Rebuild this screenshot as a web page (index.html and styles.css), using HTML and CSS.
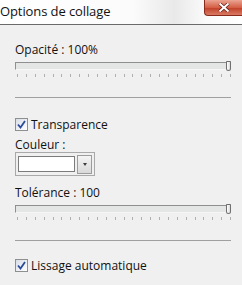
FILE: index.html
```html
<!DOCTYPE html>
<html>
<head>
    <title>Options de collage</title>
    <link rel="stylesheet" href="styles.css">
</head>
<body>
    <div class="titlebar">
        <span class="title">Options de collage</span>
        <button class="close"><svg viewBox="0 0 12 9" width="12" height="9"><path d="M1.5 0.5 L10.5 8.5 M10.5 0.5 L1.5 8.5" stroke="#5e1a10" stroke-width="3.4"/><path d="M1.5 0.5 L10.5 8.5 M10.5 0.5 L1.5 8.5" stroke="#ffffff" stroke-width="2"/></svg></button>
    </div>
    <div class="content">
        <div class="label label-first">Opacité : 100%</div>
        <div class="slider">
            <div class="track"></div>
            <div class="thumb"></div>
        </div>
        <div class="ticks" data-count="25"></div>
        <hr class="sep">

        <label class="check check-first">
            <span class="box"><svg viewBox="0 0 9 9" width="9" height="9"><path d="M1 4.5 L3.5 7.5 L8 1" fill="none" stroke="#2a4a9c" stroke-width="1.8"/></svg></span>
            Transparence
        </label>
        <div class="label label-color">Couleur :</div>
        <div class="color-picker">
            <span class="swatch"></span>
            <span class="drop"><span class="arrow"></span></span>
        </div>
        <div class="label label-tol">Tolérance : 100</div>
        <div class="slider">
            <div class="track"></div>
            <div class="thumb"></div>
        </div>
        <div class="ticks" data-count="25"></div>
        <hr class="sep">

        <label class="check check-last">
            <span class="box"><svg viewBox="0 0 9 9" width="9" height="9"><path d="M1 4.5 L3.5 7.5 L8 1" fill="none" stroke="#2a4a9c" stroke-width="1.8"/></svg></span>
            Lissage automatique
        </label>
    </div>
    <script>
        document.querySelectorAll('.ticks').forEach(function(row) {
            const count = parseInt(row.dataset.count, 10);
            for (let i = 0; i < count; i++) {
                const tick = document.createElement('span');
                row.appendChild(tick);
            }
        });
    </script>
</body>
</html>
```

FILE: styles.css
```css
body {
    margin: 0;
    width: 242px;
    height: 285px;
    overflow: hidden;
    background: #f0f0f0;
    font-family: "Open Sans", "Noto Sans", sans-serif;
    font-size: 12px;
    color: #111;
}
.titlebar {
    height: 24px;
    display: flex;
    align-items: flex-start;
    background: linear-gradient(90deg, #ffffff 0%, #fbfbfb 55%, #e9e9e9 72%, #fafafa 85%, #ffffff 100%);
    border-bottom: 1px solid #6a6a6a;
}
.title {
    font-size: 13px;
    line-height: 22px;
    color: #111;
    letter-spacing: -0.1px;
}
.close {
    margin-left: auto;
    width: 38px;
    height: 16px;
    padding: 0;
    border: 1px solid #8a2a1c;
    border-top: none;
    border-right: none;
    border-radius: 0 0 0 4px;
    background: linear-gradient(#eaa492, #d45f46 50%, #c2432b 55%, #d97a64);
    display: flex;
    align-items: center;
    justify-content: center;
}
.close svg {
    display: block;
}
.content {
    padding: 0 11px 0 15px;
}
.label {
    line-height: 16px;
    height: 16px;
}
.label-first {
    margin-top: 17px;
}
.slider {
    position: relative;
    margin-top: 4px;
    height: 8px;
}
.track {
    height: 8px;
    box-sizing: border-box;
    margin-right: 2px;
    background: #e4e6e6;
    border-top: 1px solid #8f8f8f;
    border-left: 1px solid #8f8f8f;
    border-bottom: 1px solid #f6f6f6;
    border-right: 1px solid #c8c8c8;
}
.thumb {
    position: absolute;
    right: 0;
    top: -1px;
    width: 5px;
    height: 10px;
    box-sizing: border-box;
    border: 1px solid #6f6f6f;
    border-radius: 1px 1px 3px 3px;
    background: linear-gradient(90deg, #ffffff, #dcdcdc);
}
.ticks {
    display: flex;
    justify-content: space-between;
    margin-top: 4px;
    padding: 0 0 0 2px;
    height: 3px;
}
.ticks span {
    width: 1px;
    height: 3px;
    background: #b0b0b0;
}
.sep {
    margin: 20px 0 0 0;
    border: none;
    border-top: 1px solid #a0a0a0;
    height: 0;
}
.check {
    display: flex;
    align-items: center;
    gap: 3px;
    height: 13px;
    line-height: 13px;
}
.check-first {
    margin-top: 20px;
}
.check-last {
    margin-top: 18px;
}
.box {
    width: 13px;
    height: 13px;
    box-sizing: border-box;
    border: 1px solid #8e8f8f;
    background: linear-gradient(135deg, #d8dde6, #ffffff);
    display: flex;
    align-items: center;
    justify-content: center;
}
.box svg {
    display: block;
}
.label-color {
    margin-top: 6px;
    height: 15px;
    line-height: 15px;
}
.color-picker {
    display: flex;
    align-items: center;
    gap: 2px;
    width: 80px;
    height: 24px;
    box-sizing: border-box;
    border: 1px solid #a9a9a9;
    padding: 0 2px;
}
.swatch {
    width: 58px;
    height: 16px;
    box-sizing: border-box;
    border: 1px solid #7c7c7c;
    background: #ffffff;
}
.drop {
    width: 15px;
    height: 19px;
    box-sizing: border-box;
    border: 1px solid #9c9c9c;
    background: linear-gradient(#f4f4f4, #d9d9d9);
    display: flex;
    align-items: center;
    justify-content: center;
}
.arrow {
    width: 0;
    height: 0;
    border-left: 2px solid transparent;
    border-right: 2px solid transparent;
    border-top: 3px solid #3c3c3c;
}
.label-tol {
    margin-top: 9px;
}
```
